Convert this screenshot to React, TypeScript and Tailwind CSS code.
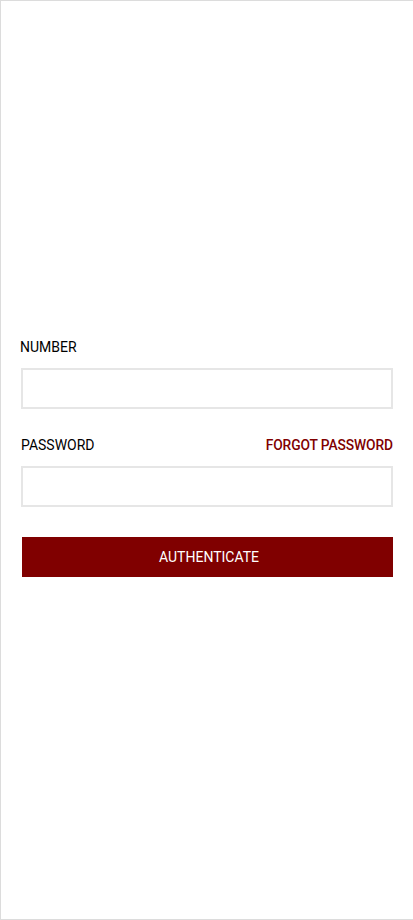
import React, { useState } from "react";

export default function App() {
  const [number, setNumber] = useState("");
  const [password, setPassword] = useState("");

  return (
    <div
      className="h-[920px] w-[413px] bg-white border-l border-t border-b border-[#dcdcdc] flex flex-col justify-center px-5 pb-[9px] text-[14px] text-black"
      style={{ fontFamily: "Roboto, 'Noto Sans', sans-serif" }}
    >
      <form className="flex flex-col" onSubmit={(e) => e.preventDefault()}>
        <label className="leading-[22px] pt-[2px] -ml-[1px]">NUMBER</label>
        <input
          className="mt-[10px] h-[41px] border-2 border-[#e6e6e6] bg-white px-3 outline-none"
          value={number}
          onChange={(e) => setNumber(e.target.value)}
        />
        <div className="mt-[26px] flex items-center justify-between leading-5">
          <span>PASSWORD</span>
          <a href="#" className="text-[13.8px] font-medium text-[#800000] tracking-[-0.1px]">
            FORGOT PASSWORD
          </a>
        </div>
        <input
          type="password"
          className="mt-[11px] h-[41px] border-2 border-[#e6e6e6] bg-white px-3 outline-none"
          value={password}
          onChange={(e) => setPassword(e.target.value)}
        />
        <button
          type="submit"
          className="mt-[30px] h-10 ml-[1px] bg-[#800000] text-white font-normal pl-[3px]"
        >
          AUTHENTICATE
        </button>
      </form>
    </div>
  );
}
